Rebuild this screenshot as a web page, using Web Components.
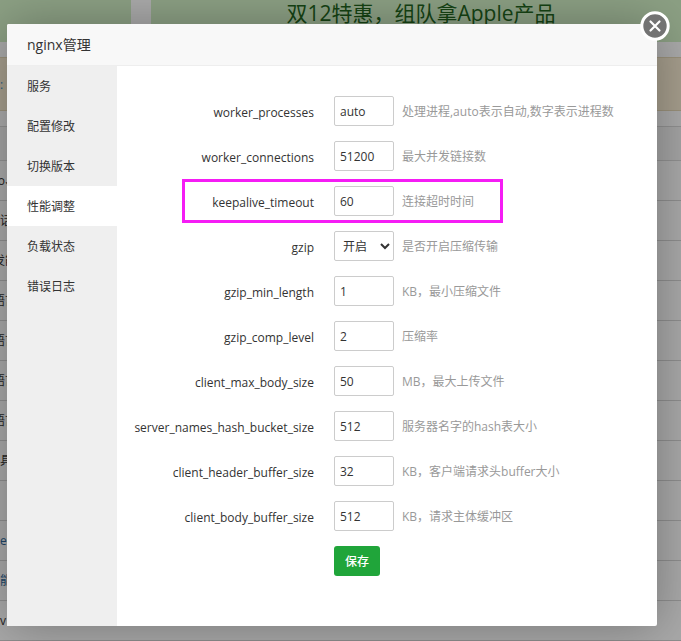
<!DOCTYPE html>
<html lang="zh-CN">
<head>
<meta charset="utf-8">
<title>nginx管理</title>
<style>
html, body { height: 100%; }
body { margin: 0; overflow: hidden; color: #333; font: 12px/20px "Open Sans", "Noto Sans CJK SC", sans-serif; }
</style>
</head>
<body>
<app-shell>
  <panel-page slot="page"></panel-page>
  <modal-dialog heading="nginx管理">
    <side-nav slot="nav" items="服务,配置修改,切换版本,性能调整,负载状态,错误日志" current="性能调整"></side-nav>
    <settings-form>
      <setting-row name="worker_processes" value="auto" hint="处理进程,auto表示自动,数字表示进程数"></setting-row>
      <setting-row name="worker_connections" value="51200" hint="最大并发链接数"></setting-row>
      <setting-row name="keepalive_timeout" value="60" hint="连接超时时间" marked></setting-row>
      <setting-row name="gzip" options="开启,关闭" hint="是否开启压缩传输"></setting-row>
      <setting-row name="gzip_min_length" value="1" hint="KB，最小压缩文件"></setting-row>
      <setting-row name="gzip_comp_level" value="2" hint="压缩率"></setting-row>
      <setting-row name="client_max_body_size" value="50" hint="MB，最大上传文件"></setting-row>
      <setting-row name="server_names_hash_bucket_size" value="512" hint="服务器名字的hash表大小"></setting-row>
      <setting-row name="client_header_buffer_size" value="32" hint="KB，客户端请求头buffer大小"></setting-row>
      <setting-row name="client_body_buffer_size" value="512" hint="KB，请求主体缓冲区"></setting-row>
    </settings-form>
  </modal-dialog>
</app-shell>
<script>
class BaseElement extends HTMLElement {
  connectedCallback() {
    if (this.shadowRoot) return;
    this.attachShadow({ mode: 'open' }).innerHTML = this.render();
  }
}

customElements.define('app-shell', class extends BaseElement {
  render() {
    return `<style>
      :host { display: block; position: relative; height: 100%; overflow: hidden; }
      .shade { position: absolute; inset: 0; box-sizing: border-box; padding: 24px 24px 15px 7px; display: grid; background: rgba(0,0,0,.3); }
    </style>
    <slot name="page"></slot>
    <div class="shade"><slot></slot></div>`;
  }
});

customElements.define('panel-page', class extends BaseElement {
  render() {
    const rows = [['o、', 'end'], ['话', ''], ['发能', 'end'], ['语言', 'end'], ['语言', 'end'], ['语言', 'end'],
      ['语言', 'end'], ['具', ''], ['', ''], ['e', 'link'], ['能', 'link'], ['v', '']];
    return `<style>
      :host { display: block; background: #f4f4f4; }
      .banners { display: grid; grid-template-columns: 131px 1fr; gap: 20px; height: 42px; }
      .banners > div { background: #c9e6bd; color: #20601c; font-size: 21px; line-height: 26px; text-align: center; white-space: nowrap; overflow: hidden; }
      .banners > div + div { padding-left: 10px; }
      .notice { margin: 15px 0; height: 52px; line-height: 54px; background: #eee3ca; border: solid #ddd0b0; border-width: 1px 0; color: #3b89bd; }
      .head { height: 33px; background: #ebebeb; border: solid #d0d0d0; border-width: 1px 0; }
      .row { height: 39px; line-height: 40px; border-bottom: 1px solid #ccc; background: #f2f2f2; }
      .row span { display: flex; width: 17px; white-space: nowrap; }
      .end span { justify-content: flex-end; }
      .link { color: #2a6496; }
    </style>
    <div class="banners"><div></div><div>双12特惠，组队拿Apple产品</div></div>
    <div class="notice">:</div>
    <div class="head"></div>
    ${rows.map(([t, c]) => `<div class="row ${c}"><span>${t}</span></div>`).join('')}`;
  }
});

customElements.define('modal-dialog', class extends BaseElement {
  render() {
    return `<style>
      :host { position: relative; display: flex; flex-direction: column; background: #fff; border-radius: 2px; box-shadow: 1px 1px 50px rgba(0,0,0,.3); }
      header { height: 41px; padding: 0 20px; background: #f8f8f8; border-bottom: 1px solid #eee; border-radius: 2px 2px 0 0; }
      h1 { margin: 0; font-size: 14px; line-height: 42px; font-weight: 400; }
      .body { flex: 1; display: grid; grid-template-columns: 110px 1fr; }
      button { position: absolute; top: -13px; right: -13px; width: 30px; height: 30px; padding: 0; border: 0; background: none; }
      svg { display: block; }
    </style>
    <header><h1>${this.getAttribute('heading')}</h1></header>
    <div class="body"><slot name="nav"></slot><slot></slot></div>
    <button type="button" aria-label="关闭"><svg width="30" height="30" viewBox="0 0 30 30">
      <circle cx="15" cy="15" r="13.2" fill="#737373" stroke="#fff" stroke-width="3"/>
      <path d="M10.5 10.5l9 9M19.5 10.5l-9 9" stroke="#fff" stroke-width="2.2" stroke-linecap="round"/>
    </svg></button>`;
  }
});

customElements.define('side-nav', class extends BaseElement {
  render() {
    const current = this.getAttribute('current');
    return `<style>
      :host { display: block; background: #efefef; }
      nav { display: flex; flex-direction: column; }
      a { height: 40px; padding-left: 20px; line-height: 42px; color: #333; text-decoration: none; }
      a[aria-current] { background: #fff; }
    </style>
    <nav>${this.getAttribute('items').split(',').map(t =>
      `<a href="#"${t === current ? ' aria-current="page"' : ''}>${t}</a>`).join('')}</nav>`;
  }
});

customElements.define('settings-form', class extends BaseElement {
  render() {
    return `<style>
      :host { display: block; padding-top: 30px; }
      form { display: flex; flex-direction: column; gap: 15px; }
      button { align-self: flex-start; margin-left: 217px; height: 30px; padding: 2px 11px 0; border: 0; border-radius: 3px; background: #20a53a; color: #fff; font: inherit; font-weight: 500; }
    </style>
    <form><slot></slot><button type="button">保存</button></form>`;
  }
});

customElements.define('setting-row', class extends BaseElement {
  render() {
    const name = this.getAttribute('name');
    const options = this.getAttribute('options');
    const control = options
      ? `<select id="field" name="${name}">${options.split(',').map(o => `<option>${o}</option>`).join('')}</select>`
      : `<input id="field" name="${name}" type="text" value="${this.getAttribute('value')}">`;
    return `<style>
      :host { position: relative; display: grid; grid-template-columns: 197px 60px 1fr; align-items: center; height: 30px; }
      label { padding-top: 3px; text-align: right; }
      input, select { box-sizing: border-box; width: 60px; height: 30px; margin: 0 0 0 20px; border: 1px solid #ccc; border-radius: 2px; background: #fff; color: #333; font: inherit; }
      :host { grid-template-columns: 197px 80px 1fr; }
      input { padding: 0 5px; }
      select { padding: 0 4px; }
      .hint { padding: 2px 0 0 8px; color: #999; white-space: nowrap; }
      :host([marked])::after { content: ""; position: absolute; inset: -7px auto -7px 65px; width: 315px; border: 3px solid #f51cf5; pointer-events: none; }
    </style>
    <label for="field">${name}</label>${control}<span class="hint">${this.getAttribute('hint')}</span>`;
  }
});
</script>
</body>
</html>
